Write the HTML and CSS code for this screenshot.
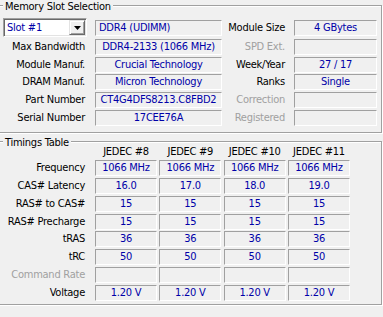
FILE: index.html
```html
<!DOCTYPE html>
<html>
<head>
<meta charset="utf-8">
<link rel="stylesheet" href="styles.css">
</head>
<body>
<div class="group slot-group">
  <div class="group-title">Memory Slot Selection</div>
  <div class="rows">
    <div class="row row-first">
      <div class="combo">
        <span class="combo-text">Slot #1</span>
        <span class="combo-btn"><svg width="7" height="4" viewBox="0 0 7 4"><path d="M0 0H7L3.5 4Z" fill="#000"/></svg></span>
      </div>
      <div class="field lfield align-left">DDR4 (UDIMM)</div>
      <div class="rlabel">Module Size</div>
      <div class="field rfield">4 GBytes</div>
    </div>
    <div class="row">
      <div class="label">Max Bandwidth</div>
      <div class="field lfield">DDR4-2133 (1066 MHz)</div>
      <div class="rlabel disabled">SPD Ext.</div>
      <div class="field rfield"></div>
    </div>
    <div class="row">
      <div class="label">Module Manuf.</div>
      <div class="field lfield">Crucial Technology</div>
      <div class="rlabel">Week/Year</div>
      <div class="field rfield">27 / 17</div>
    </div>
    <div class="row">
      <div class="label">DRAM Manuf.</div>
      <div class="field lfield">Micron Technology</div>
      <div class="rlabel">Ranks</div>
      <div class="field rfield">Single</div>
    </div>
    <div class="row">
      <div class="label">Part Number</div>
      <div class="field lfield">CT4G4DFS8213.C8FBD2</div>
      <div class="rlabel disabled">Correction</div>
      <div class="field rfield"></div>
    </div>
    <div class="row">
      <div class="label">Serial Number</div>
      <div class="field lfield">17CEE76A</div>
      <div class="rlabel disabled">Registered</div>
      <div class="field rfield"></div>
    </div>
  </div>
</div>

<div class="group timing-group">
  <div class="group-title">Timings Table</div>
  <div class="trow thead">
    <div class="tlabel"></div>
    <div class="tcells">
      <div class="hcell">JEDEC #8</div>
      <div class="hcell">JEDEC #9</div>
      <div class="hcell">JEDEC #10</div>
      <div class="hcell">JEDEC #11</div>
    </div>
  </div>
  <div class="tbody">
    <div class="trow">
      <div class="tlabel">Frequency</div>
      <div class="tcells"><div class="cell">1066 MHz</div><div class="cell">1066 MHz</div><div class="cell">1066 MHz</div><div class="cell">1066 MHz</div></div>
    </div>
    <div class="trow">
      <div class="tlabel">CAS# Latency</div>
      <div class="tcells"><div class="cell">16.0</div><div class="cell">17.0</div><div class="cell">18.0</div><div class="cell">19.0</div></div>
    </div>
    <div class="trow">
      <div class="tlabel">RAS# to CAS#</div>
      <div class="tcells"><div class="cell">15</div><div class="cell">15</div><div class="cell">15</div><div class="cell">15</div></div>
    </div>
    <div class="trow">
      <div class="tlabel">RAS# Precharge</div>
      <div class="tcells"><div class="cell">15</div><div class="cell">15</div><div class="cell">15</div><div class="cell">15</div></div>
    </div>
    <div class="trow">
      <div class="tlabel">tRAS</div>
      <div class="tcells"><div class="cell">36</div><div class="cell">36</div><div class="cell">36</div><div class="cell">36</div></div>
    </div>
    <div class="trow">
      <div class="tlabel">tRC</div>
      <div class="tcells"><div class="cell">50</div><div class="cell">50</div><div class="cell">50</div><div class="cell">50</div></div>
    </div>
    <div class="trow">
      <div class="tlabel disabled">Command Rate</div>
      <div class="tcells"><div class="cell"></div><div class="cell"></div><div class="cell"></div><div class="cell"></div></div>
    </div>
    <div class="trow">
      <div class="tlabel">Voltage</div>
      <div class="tcells"><div class="cell">1.20 V</div><div class="cell">1.20 V</div><div class="cell">1.20 V</div><div class="cell">1.20 V</div></div>
    </div>
  </div>
</div>
</body>
</html>
```

FILE: styles.css
```css
html, body {
  margin: 0;
  padding: 0;
  background: #f0f0f0;
}
body {
  width: 383px;
  height: 317px;
  overflow: hidden;
  font-family: "DejaVu Sans Condensed", "Liberation Sans", Arial, sans-serif;
  font-size: 11px;
  letter-spacing: -0.25px;
  line-height: 13px;
  color: #000;
}
.group {
  position: relative;
  box-sizing: border-box;
  width: 384px;
  margin-left: -2px;
  border: 1px solid #a0a0a0;
  box-shadow: 1px 1px 0 #fff, inset 1px 1px 0 #fff;
}
.group-title {
  position: absolute;
  left: 4px;
  top: -6px;
  padding: 0 2px;
  background: #f0f0f0;
  line-height: 13px;
  white-space: nowrap;
}
.slot-group {
  margin-top: 5px;
  padding: 12px 0 6px 0;
}
.rows {
  display: flex;
  flex-direction: column;
  gap: 1.8px;
}
.row {
  display: flex;
  height: 16px;
}
.row-first {
  height: 19px;
}
.label {
  width: 86px;
  margin-right: 10px;
  text-align: right;
  line-height: 16px;
  white-space: nowrap;
}
.rlabel {
  width: 63px;
  margin-right: 9px;
  text-align: right;
  line-height: 16px;
  white-space: nowrap;
}
.row-first .rlabel {
  margin-top: 2px;
}
.disabled {
  color: #a0a0a0;
}
.field {
  box-sizing: border-box;
  height: 16px;
  border-top: 1px solid #a0a0a0;
  border-left: 1px solid #a0a0a0;
  border-bottom: 1px solid #fff;
  border-right: 1px solid #fff;
  color: #0000a8;
  text-align: center;
  line-height: 14px;
  white-space: nowrap;
  overflow: hidden;
}
.row-first .field {
  margin-top: 2px;
}
.lfield {
  width: 127px;
}
.rfield {
  width: 83px;
}
.align-left {
  text-align: left;
  padding-left: 3px;
}
.combo {
  box-sizing: border-box;
  width: 84px;
  height: 19px;
  margin-left: 4px;
  margin-right: 8px;
  display: flex;
  align-items: stretch;
  background: #fff;
  border-top: 1px solid #a0a0a0;
  border-left: 1px solid #a0a0a0;
  border-bottom: 1px solid #fff;
  border-right: 1px solid #fff;
  box-shadow: inset 1px 1px 0 #696969, inset -1px -1px 0 #e3e3e3;
  padding: 1px;
}
.combo-text {
  flex: 1;
  padding-left: 2px;
  color: #0000a8;
  line-height: 15px;
}
.combo-btn {
  box-sizing: border-box;
  width: 16px;
  display: flex;
  align-items: center;
  justify-content: center;
  background: #f0f0f0;
  border-top: 1px solid #e3e3e3;
  border-left: 1px solid #e3e3e3;
  border-bottom: 1px solid #696969;
  border-right: 1px solid #696969;
  box-shadow: inset 1px 1px 0 #fff, inset -1px -1px 0 #a0a0a0;
}
.timing-group {
  margin-top: 8px;
  padding: 3px 0 3px 0;
}
.tbody {
  display: flex;
  flex-direction: column;
  gap: 1.86px;
}
.trow {
  display: flex;
  height: 16px;
}
.thead {
  height: 13px;
  margin-bottom: 2px;
}
.tlabel {
  width: 86px;
  margin-right: 10px;
  text-align: right;
  line-height: 16px;
  white-space: nowrap;
}
.tcells {
  display: flex;
  gap: 2.33px;
}
.hcell {
  width: 62px;
  text-align: center;
  line-height: 13px;
  white-space: nowrap;
}
.cell {
  box-sizing: border-box;
  width: 62px;
  height: 16px;
  border-top: 1px solid #a0a0a0;
  border-left: 1px solid #a0a0a0;
  border-bottom: 1px solid #fff;
  border-right: 1px solid #fff;
  color: #0000a8;
  text-align: center;
  line-height: 14px;
  white-space: nowrap;
}
```
